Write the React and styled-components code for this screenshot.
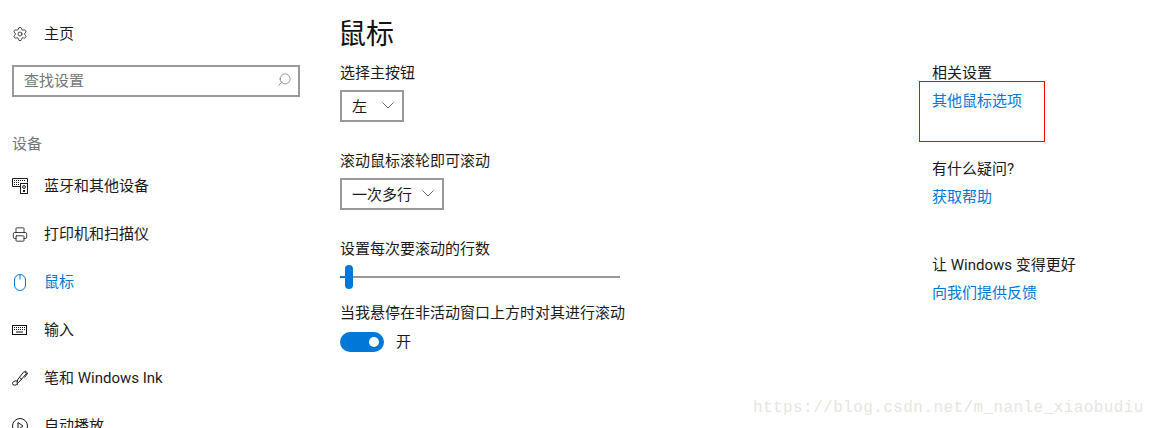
import React from "react";
import styled, { createGlobalStyle } from "styled-components";
import { Settings, Search, Printer } from "lucide-react";

const GlobalStyle = createGlobalStyle`
  html, body {
    margin: 0;
    padding: 0;
    background: #fff;
    height: 428px;
    overflow: hidden;
  }
  body {
    font-family: Roboto, "Noto Sans CJK SC", sans-serif;
    font-size: 15px;
    color: #1a1a1a;
  }
`;

const Page = styled.div`
  position: relative;
  display: flex;
  width: 1154px;
  height: 428px;
  overflow: hidden;
`;

const Sidebar = styled.nav`
  width: 340px;
  flex: none;
  box-sizing: border-box;
  padding: 10px 0 0 12px;
`;

const NavRow = styled.div`
  display: flex;
  align-items: center;
  gap: 16px;
  height: 48px;
  line-height: 48px;
  white-space: nowrap;
  color: ${(p) => (p.$active ? "#0078d7" : "#1a1a1a")};
`;

const IconSlot = styled.span`
  display: flex;
  align-items: center;
  justify-content: center;
  width: 16px;
  height: 16px;
  flex: none;
`;

const SearchBox = styled.div`
  display: flex;
  align-items: center;
  justify-content: space-between;
  box-sizing: border-box;
  width: 288px;
  height: 32px;
  margin-top: 7px;
  padding: 0 6px 3px 10px;
  border: 2px solid #999;
  color: #767676;
`;

const SectionLabel = styled.div`
  margin-top: 36px;
  margin-bottom: 7px;
  height: 22px;
  line-height: 22px;
  color: #767676;
`;

const Main = styled.main`
  width: 592px;
  flex: none;
  padding-top: 15px;
`;

const Title = styled.h1`
  margin: 0 0 7px -2px;
  height: 40px;
  font-size: 28px;
  line-height: 40px;
  font-weight: 400;
  color: #111;
`;

const Label = styled.div`
  height: 22px;
  line-height: 22px;
  white-space: nowrap;
`;

const Select = styled.div`
  display: flex;
  align-items: center;
  gap: ${(p) => p.$gap}px;
  width: fit-content;
  box-sizing: border-box;
  height: 32px;
  margin-top: 6px;
  margin-bottom: 28px;
  padding: 0 8px 2px 10px;
  border: 2px solid #999;
`;

const Slider = styled.div`
  position: relative;
  width: 280px;
  height: 24px;
  margin-top: 5px;
  margin-bottom: 13px;
  display: flex;
  align-items: center;
`;

const Track = styled.div`
  width: 100%;
  height: 2px;
  background: #999;
`;

const TrackFill = styled.div`
  position: absolute;
  left: 0;
  top: 11px;
  width: 6px;
  height: 2px;
  background: #0078d7;
`;

const Thumb = styled.div`
  position: absolute;
  left: 5px;
  top: 0;
  width: 8px;
  height: 24px;
  border-radius: 4px;
  background: #0078d7;
`;

const ToggleRow = styled.div`
  display: flex;
  align-items: center;
  gap: 12px;
  height: 20px;
  margin-top: 8px;
  line-height: 18px;
`;

const Toggle = styled.div`
  position: relative;
  width: 44px;
  height: 20px;
  border-radius: 10px;
  background: #0078d7;
`;

const ToggleKnob = styled.div`
  position: absolute;
  right: 5px;
  top: 5px;
  width: 10px;
  height: 10px;
  border-radius: 50%;
  background: #fff;
`;

const Aside = styled.aside`
  padding-top: 62px;
`;

const AsideGroup = styled.div`
  height: 96px;
`;

const AsideTitle = styled.div`
  height: 22px;
  line-height: 22px;
  margin-bottom: 6px;
  white-space: nowrap;
`;

const AsideLink = styled.a`
  display: block;
  height: 22px;
  line-height: 22px;
  color: #0078d7;
  white-space: nowrap;
`;

const Annotation = styled.div`
  position: absolute;
  left: 919px;
  top: 81px;
  width: 126px;
  height: 61px;
  box-sizing: border-box;
  border: 1px solid #f00;
`;

const Watermark = styled.div`
  position: absolute;
  left: 753px;
  top: 398px;
  font-family: "Liberation Mono", monospace;
  font-size: 16px;
  line-height: 20px;
  letter-spacing: 0.42px;
  color: #e6e6e0;
  white-space: nowrap;
`;

const Chevron = () => (
  <svg width="12" height="7" viewBox="0 0 12 7" fill="none" stroke="#666" strokeWidth="1">
    <path d="M.5.5 6 6 11.5.5" />
  </svg>
);

const DeviceIcon = () => (
  <svg width="16" height="16" viewBox="0 0 16 16" fill="none" stroke="currentColor" strokeWidth="1">
    <path d="M8 8.5H.5v-8h15v4" />
    <path d="M2 2.5h11M2 4.5h5M2 6.5h5" strokeDasharray="1 1" />
    <rect x="8.5" y="5.5" width="7" height="10" />
    <circle cx="12" cy="9" r="1.4" />
    <path d="M11 13h2" strokeWidth="2" />
  </svg>
);

const MouseIcon = () => (
  <svg width="16" height="17" viewBox="0 0 16 17" fill="none" stroke="currentColor" strokeWidth="1">
    <path d="M2.5 6a5.5 5.5 0 0 1 11 0v5a5.5 5.5 0 0 1-11 0z" />
    <path d="M8 .5v5" />
  </svg>
);

const KeyboardIcon = () => (
  <svg width="16" height="16" viewBox="0 0 16 16" fill="none" stroke="#111" strokeWidth="1">
    <rect x="0.5" y="3.5" width="14" height="9" />
    <path d="M2 5.5h11M2 7.5h11" strokeDasharray="1 1" />
    <path d="M4 10h7" />
  </svg>
);

const PenIcon = () => (
  <svg width="16" height="16" viewBox="0 0 16 16" fill="none" stroke="currentColor" strokeWidth="1">
    <path d="M6.5 12.5 5 13.5l.6-3.8L12 1.5l2.5 2z" />
    <path d="M7.5 7.5 10 9.5M13 .8l2.7 2.4-3.2 4.3" />
    <path d="M5 11c-2.4-.6-4.5 1-4.5 2.6 0 1.8 3 2.2 5.5.4" />
  </svg>
);

const PlayIcon = () => (
  <svg width="16" height="16" viewBox="0 0 16 16" fill="none" stroke="currentColor" strokeWidth="1">
    <circle cx="8" cy="8" r="7.5" />
    <path d="M6 4.5v7l5-3.5z" />
  </svg>
);

const navItems = [
  { label: "蓝牙和其他设备", icon: <DeviceIcon /> },
  { label: "打印机和扫描仪", icon: <Printer size={19} strokeWidth={1.25} /> },
  { label: "鼠标", icon: <MouseIcon />, active: true },
  { label: "输入", icon: <KeyboardIcon /> },
  { label: "笔和 Windows Ink", icon: <PenIcon /> },
  { label: "自动播放", icon: <PlayIcon /> },
];

const asideGroups = [
  { title: "相关设置", link: "其他鼠标选项" },
  { title: "有什么疑问?", link: "获取帮助" },
  { title: "让 Windows 变得更好", link: "向我们提供反馈" },
];

export default function App() {
  return (
    <Page>
      <GlobalStyle />
      <Sidebar>
        <NavRow>
          <IconSlot>
            <Settings size={20} strokeWidth={1.2} />
          </IconSlot>
          主页
        </NavRow>
        <SearchBox>
          查找设置
          <Search size={15} strokeWidth={1.2} style={{ transform: "scaleX(-1)" }} />
        </SearchBox>
        <SectionLabel>设备</SectionLabel>
        {navItems.map((item) => (
          <NavRow key={item.label} $active={item.active}>
            <IconSlot>{item.icon}</IconSlot>
            {item.label}
          </NavRow>
        ))}
      </Sidebar>
      <Main>
        <Title>鼠标</Title>
        <Label>选择主按钮</Label>
        <Select $gap={15}>
          左
          <Chevron />
        </Select>
        <Label>滚动鼠标滚轮即可滚动</Label>
        <Select $gap={10}>
          一次多行
          <Chevron />
        </Select>
        <Label>设置每次要滚动的行数</Label>
        <Slider>
          <Track />
          <TrackFill />
          <Thumb />
        </Slider>
        <Label>当我悬停在非活动窗口上方时对其进行滚动</Label>
        <ToggleRow>
          <Toggle>
            <ToggleKnob />
          </Toggle>
          开
        </ToggleRow>
      </Main>
      <Aside>
        {asideGroups.map((group) => (
          <AsideGroup key={group.title}>
            <AsideTitle>{group.title}</AsideTitle>
            <AsideLink>{group.link}</AsideLink>
          </AsideGroup>
        ))}
      </Aside>
      <Annotation />
      <Watermark>https://blog.csdn.net/m_nanle_xiaobudiu</Watermark>
    </Page>
  );
}
